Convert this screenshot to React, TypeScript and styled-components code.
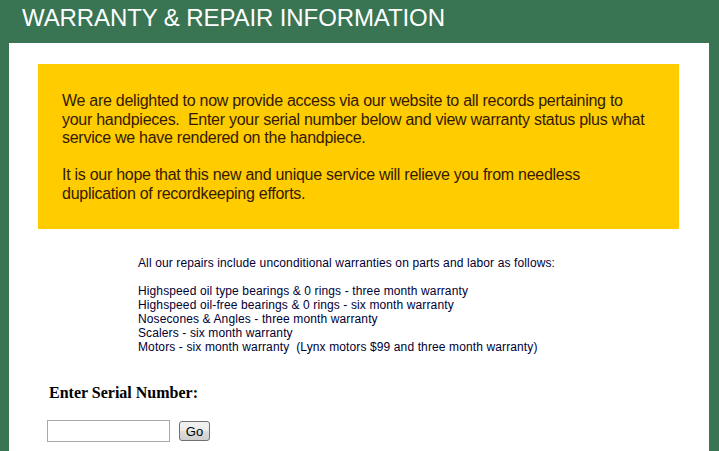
import styled, { createGlobalStyle } from 'styled-components';

const GlobalStyle = createGlobalStyle`
  html, body {
    margin: 0;
    padding: 0;
    background: #397453;
  }
`;

const Page = styled.div`
  width: 719px;
  min-height: 451px;
  background: #397453;
  overflow: hidden;
`;

const Title = styled.h1`
  margin: 0;
  height: 43px;
  padding-left: 22px;
  font-family: 'Liberation Sans', Arial, sans-serif;
  font-weight: normal;
  font-size: 24px;
  line-height: 35px;
  letter-spacing: -0.1px;
  color: #ffffff;
`;

const Panel = styled.div`
  width: 700px;
  margin: 0 10px 0 9px;
  min-height: 420px;
  background: #ffffff;
  padding: 21px 30px 0 29px;
  box-sizing: border-box;
`;

const Notice = styled.div`
  background: #ffcc00;
  padding: 28px 24px 26px;
  font-family: 'Liberation Sans', Arial, sans-serif;
  font-size: 16px;
  line-height: 18.5px;
  letter-spacing: -0.27px;
  white-space: nowrap;
  color: #331a00;

  p {
    margin: 0;
  }

  p + p {
    margin-top: 18.5px;
  }
`;

const Warranty = styled.div`
  margin: 27px 0 0 100px;
  font-family: 'Liberation Sans', Arial, sans-serif;
  font-size: 12px;
  line-height: 14px;
  letter-spacing: 0.12px;
  white-space: nowrap;
  color: #000033;

  p {
    margin: 0;
  }

  p + p {
    margin-top: 14px;
  }
`;

const SerialForm = styled.form`
  margin: 29px 0 0 9px;
  font-family: 'Liberation Serif', 'Times New Roman', serif;
`;

const Label = styled.div`
  padding-left: 2px;
  font-weight: bold;
  font-size: 16px;
  line-height: 20px;
  color: #000000;
`;

const Row = styled.div`
  display: flex;
  align-items: center;
  gap: 9px;
  margin-top: 17px;
`;

const SerialInput = styled.input`
  width: 123px;
  height: 22px;
  box-sizing: border-box;
  border: 1px solid #a9a9a9;
  padding: 1px 3px;
  font-size: 13px;
  background: #ffffff;
`;

const GoButton = styled.button`
  width: 31px;
  height: 20px;
  box-sizing: border-box;
  padding: 0;
  border: 1px solid #707070;
  border-radius: 3px;
  background: linear-gradient(#f2f2f2, #ebebeb 50%, #dddddd 50%, #cfcfcf);
  font-family: 'Liberation Sans', Arial, sans-serif;
  font-size: 13px;
  color: #000000;
`;

const items = [
  'Highspeed oil type bearings & 0 rings - three month warranty',
  'Highspeed oil-free bearings & 0 rings - six month warranty',
  'Nosecones & Angles - three month warranty',
  'Scalers - six month warranty',
  'Motors - six month warranty \u00a0(Lynx motors $99 and three month warranty)',
];

const App = () => (
  <Page>
    <GlobalStyle />
    <Title>WARRANTY &amp; REPAIR INFORMATION</Title>
    <Panel>
      <Notice>
        <p>
          We are delighted to now provide access via our website to all records pertaining to
          <br />
          your handpieces.&nbsp; Enter your serial number below and view warranty status plus what
          <br />
          service we have rendered on the handpiece.
        </p>
        <p>
          It is our hope that this new and unique service will relieve you from needless
          <br />
          duplication of recordkeeping efforts.
        </p>
      </Notice>
      <Warranty>
        <p>All our repairs include unconditional warranties on parts and labor as follows:</p>
        <p>
          {items.map((item) => (
            <span key={item}>
              {item}
              <br />
            </span>
          ))}
        </p>
      </Warranty>
      <SerialForm onSubmit={(e) => e.preventDefault()}>
        <Label>Enter Serial Number:</Label>
        <Row>
          <SerialInput type="text" />
          <GoButton type="submit">Go</GoButton>
        </Row>
      </SerialForm>
    </Panel>
  </Page>
);

export default App;
